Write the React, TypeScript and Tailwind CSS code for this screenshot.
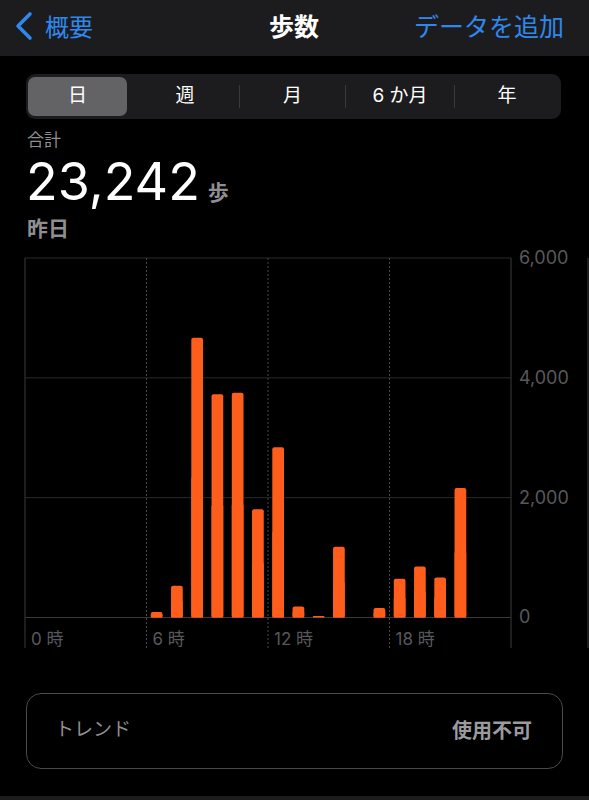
const BARS: [number, number][] = [
  [6, 90], [7, 530], [8, 4670], [9, 3727], [10, 3753], [11, 1808], [12, 2843],
  [13, 183], [14, 25], [15, 1180], [17, 160], [18, 645], [19, 850], [20, 667], [21, 2163],
]

const FONT = { fontFamily: 'Inter, "Noto Sans CJK JP", sans-serif' }

// chart geometry, page px
const LEFT = 25
const RIGHT = 511
const TOP = 16
const ZERO = 375.5
const BOTTOM = 406
const SLOT = (RIGHT - LEFT) / 24

function StepChart() {
  const y = (v: number) => ZERO - (v / 6000) * (ZERO - TOP)
  const grid = [6000, 4000, 2000, 0]
  return (
    <svg width="589" height="420" className="block" style={FONT}>
      {grid.map((g) => (
        <line key={g} x1={LEFT} x2={RIGHT} y1={y(g)} y2={y(g)} stroke={g === 0 ? '#3a3a3c' : '#2a2a2c'} strokeWidth="1" />
      ))}
      <line x1={LEFT} x2={LEFT} y1={TOP} y2={BOTTOM} stroke="#3a3a3c" />
      <line x1={RIGHT} x2={RIGHT} y1={TOP} y2={BOTTOM} stroke="#3a3a3c" />
      <line x1={588} x2={588} y1={TOP} y2={BOTTOM} stroke="#3a3a3c" />
      {[6, 12, 18].map((h) => (
        <line key={h} x1={LEFT + h * SLOT} x2={LEFT + h * SLOT} y1={TOP} y2={BOTTOM} stroke="#48484a" strokeDasharray="2 2" />
      ))}
      {BARS.map(([h, v]) => {
        const x = LEFT + h * SLOT + 4.3
        const top = y(v)
        const hgt = ZERO - top
        return (
          <g key={h} fill="#ff5d1c">
            <rect x={x} y={top} width="11.7" height={hgt} rx={Math.min(2, hgt / 2)} />
            {hgt > 2 && <rect x={x} y={top + hgt / 2} width="11.7" height={hgt / 2} />}
          </g>
        )
      })}
      {grid.map((g) => (
        <text key={g} x="519" y={y(g) + 1} dominantBaseline="middle" fontSize="18" fill="#58585c">
          {g.toLocaleString('en-US')}
        </text>
      ))}
      {[0, 6, 12, 18].map((h) => (
        <text key={h} x={LEFT + h * SLOT + 6} y="403" fontSize="17" fill="#58585c">
          {h} 時
        </text>
      ))}
    </svg>
  )
}

export default function App() {
  return (
    <div className="w-[589px] h-[800px] bg-black overflow-hidden flex flex-col" style={FONT}>
      <div className="h-[56px] bg-[#1c1c1e] relative flex items-center px-[14px] shrink-0">
        <div className="flex items-center gap-[11px] text-[#2f88ed]">
          <svg width="20" height="30" viewBox="0 0 20 30" className="-mt-[4px]">
            <polyline points="16,3 4,15 16,27" fill="none" stroke="#2f88ed" strokeWidth="3.6" strokeLinecap="round" strokeLinejoin="round" />
          </svg>
          <span className="text-[24px]">概要</span>
        </div>
        <span className="absolute left-[269px] text-[25px] font-bold text-white">歩数</span>
        <span className="ml-auto mr-[11px] text-[25px] text-[#2f88ed]">データを追加</span>
      </div>

      <div className="mt-[18px] ml-[26px] w-[535px] h-[45px] rounded-[9px] bg-[#1c1c1e] p-[2px] py-[3px] flex items-center text-white text-[19px]">
        <div className="w-[103px] h-full flex">
          <div className="w-[99px] h-full rounded-[7px] bg-[#636366] flex items-center justify-center">日</div>
        </div>
        <div className="w-[108px] text-center">週</div>
        <div className="w-px h-[23px] bg-[#3a3a3c]" />
        <div className="w-[105px] text-center">月</div>
        <div className="w-px h-[23px] bg-[#3a3a3c]" />
        <div className="w-[108px] text-center">6 か月</div>
        <div className="w-px h-[23px] bg-[#3a3a3c]" />
        <div className="w-[104px] text-center">年</div>
      </div>

      <div className="mt-[10px] px-[27px] text-[17px] leading-[22px] text-[#8e8e93]">合計</div>
      <div className="px-[26px] mt-[5px] flex items-baseline gap-[8px]">
        <span className="text-[52px] leading-[52px] text-white">23,242</span>
        <span className="text-[21px] font-semibold text-[#8e8e93]">歩</span>
      </div>
      <div className="mt-[7px] px-[27px] text-[21px] leading-[26px] font-semibold text-[#8e8e93]">昨日</div>

      <div>
        <StepChart />
      </div>

      <div className="mt-[31px] ml-[26px] w-[537px] h-[76px] rounded-[15px] border-[1.5px] border-[#4a4a4c] flex items-center justify-between px-[28px] pr-[30px]">
        <span className="text-[19px] text-[#8e8e93]">トレンド</span>
        <span className="text-[20px] font-semibold text-[#9a9a9f]">使用不可</span>
      </div>
      <div className="mt-auto h-[4px] bg-[#1c1c1e]" />
    </div>
  )
}
